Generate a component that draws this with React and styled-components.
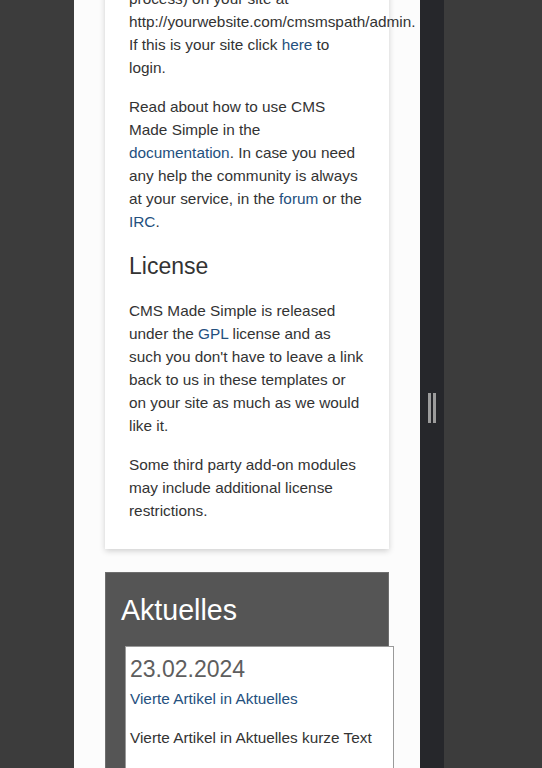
import React from "react";
import styled, { createGlobalStyle } from "styled-components";

const Global = createGlobalStyle`
  html, body { margin: 0; padding: 0; height: 100%; overflow: hidden; }
  body { background: #3c3c3c; font-family: "Liberation Sans", Arial, sans-serif; }
  #root { height: 100%; }
`;

const Screen = styled.div`
  display: flex;
  height: 768px;
  overflow: hidden;
`;

const Gutter = styled.div`
  width: ${(p) => p.$w}px;
  flex: ${(p) => (p.$grow ? "1" : "none")};
  background: #3c3c3c;
`;

const Page = styled.main`
  width: 346px;
  flex: none;
  background: #fcfcfc;
  overflow: hidden;
  color: #333;
  font-size: 15.35px;
  line-height: 23px;
`;

const Card = styled.section`
  margin: -37px 0 0 31px;
  width: 284px;
  box-sizing: border-box;
  padding: 24px 24px 27px;
  background: #fff;
  box-shadow: 0 2px 6px rgba(0, 0, 0, 0.18);
`;

const P = styled.p`
  margin: 0 0 16px;
  &:last-child { margin-bottom: 0; }
`;

const Link = styled.a`
  color: #24507e;
  text-decoration: none;
`;

const H2 = styled.h2`
  margin: 20px 0;
  font-size: 23px;
  line-height: 26px;
  font-weight: normal;
  color: #333;
`;

const NewsBox = styled.section`
  margin: 23px 0 0 31px;
  width: 284px;
  box-sizing: border-box;
  background: #555;
  border: 1px solid #6e6e6e;
  padding: 21px 0 40px;
`;

const NewsTitle = styled.h2`
  margin: 0 0 20px 15px;
  font-size: 28.6px;
  line-height: 32px;
  font-weight: normal;
  color: #fff;
`;

const Article = styled.article`
  margin: 0 -6px 0 19px;
  background: #fff;
  border: 1px solid #9a9a9a;
  padding: 8px 4px 30px;
`;

const DateLine = styled.div`
  font-size: 23px;
  line-height: 28px;
  color: #5e5e5e;
`;

const ArticleLink = styled(Link)`
  display: block;
  margin-top: 4px;
`;

const Summary = styled.p`
  margin: 16px 0 0;
`;

const Divider = styled.div`
  width: 24px;
  flex: none;
  background: #26272b;
  display: flex;
  justify-content: center;
  align-items: flex-start;
`;

const Grip = styled.div`
  margin-top: 393px;
  display: flex;
  gap: 2px;
`;

const GripBar = styled.span`
  width: 3px;
  height: 30px;
  background: #9c9c9c;
`;

export default function App() {
  return (
    <>
      <Global />
      <Screen>
        <Gutter $w={74} />
        <Page>
          <Card>
            <P>
              process) on your site at http://yourwebsite.com/cmsmspath/admin. If this is your site click{" "}
              <Link href="#">here</Link> to login.
            </P>
            <P>
              Read about how to use CMS Made Simple in the <Link href="#">documentation</Link>. In case you need
              any help the community is always at your service, in the <Link href="#">forum</Link> or the{" "}
              <Link href="#">IRC</Link>.
            </P>
            <H2>License</H2>
            <P>
              CMS Made Simple is released under the <Link href="#">GPL</Link> license and as such you don't have
              to leave a link back to us in these templates or on your site as much as we would like it.
            </P>
            <P>Some third party add-on modules may include additional license restrictions.</P>
          </Card>
          <NewsBox>
            <NewsTitle>Aktuelles</NewsTitle>
            <Article>
              <DateLine>23.02.2024</DateLine>
              <ArticleLink href="#">Vierte Artikel in Aktuelles</ArticleLink>
              <Summary>Vierte Artikel in Aktuelles kurze Text</Summary>
            </Article>
          </NewsBox>
        </Page>
        <Divider>
          <Grip>
            <GripBar />
            <GripBar />
          </Grip>
        </Divider>
        <Gutter $grow />
      </Screen>
    </>
  );
}
